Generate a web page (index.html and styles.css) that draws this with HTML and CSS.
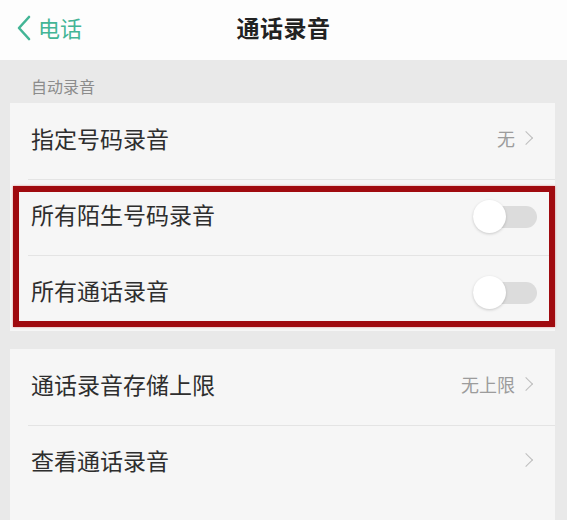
FILE: index.html
```html
<!DOCTYPE html>
<html>
<head>
  <meta charset="utf-8">
  <title>通话录音</title>
  <link rel="stylesheet" href="styles.css">
</head>
<body>
  <div class="topbar">
    <div class="back">
      <svg class="back-icon" width="16" height="26" viewBox="0 0 16 26">
        <path d="M13 2 L3 13 L13 24" fill="none" stroke="#43b596" stroke-width="2.6" stroke-linecap="round" stroke-linejoin="round"/>
      </svg>
      <span>电话</span>
    </div>
    <h1>通话录音</h1>
  </div>

  <div class="section-title">自动录音</div>

  <div class="card card-auto">
    <div class="row">
      <span class="label">指定号码录音</span>
      <span class="value">无<i class="arrow"></i></span>
    </div>
    <div class="row">
      <span class="label">所有陌生号码录音</span>
      <span class="switch"><span class="knob"></span></span>
    </div>
    <div class="row">
      <span class="label">所有通话录音</span>
      <span class="switch"><span class="knob"></span></span>
    </div>
    <!-- highlight frame drawn over the two switch rows -->
    <div class="highlight"></div>
  </div>

  <div class="card card-last">
    <div class="row">
      <span class="label">通话录音存储上限</span>
      <span class="value">无上限<i class="arrow"></i></span>
    </div>
    <div class="row">
      <span class="label">查看通话录音</span>
      <span class="value"><i class="arrow"></i></span>
    </div>
  </div>
</body>
</html>
```

FILE: styles.css
```css
body {
    margin: 0;
    background-color: #e9e9e9;
    font-family: "Noto Sans CJK SC", "Noto Sans", sans-serif;
    color: #333;
    overflow: hidden;
    height: 520px;
}

.topbar {
    height: 60px;
    background-color: #fdfdfd;
    display: flex;
    align-items: center;
    justify-content: center;
    position: relative;
}

.topbar h1 {
    margin: 0;
    font-size: 23px;
    font-weight: bold;
    color: #222;
    letter-spacing: 0.5px;
    margin-top: -6px;
}

.back {
    position: absolute;
    left: 16px;
    top: 15px;
    display: flex;
    align-items: center;
    gap: 6px;
    color: #43b596;
    font-size: 22px;
    line-height: 26px;
}

.back span {
    margin-top: -3px;
}

.back-icon {
    display: block;
}

.section-title {
    height: 43px;
    padding-left: 31px;
    font-size: 16px;
    color: #8c8c8c;
    line-height: 52px;
}

.card {
    margin: 0 12px 18px 10px;
    background-color: #f6f6f6;
    position: relative;
}

.card-last {
    padding-bottom: 19px;
    margin-bottom: 0;
}

.row {
    height: 76px;
    display: flex;
    align-items: center;
    justify-content: space-between;
    padding: 0 20px 0 21px;
    position: relative;
}

.row + .row::before {
    content: "";
    position: absolute;
    left: 18px;
    right: 0;
    top: 0;
    border-top: 1px solid #e4e4e4;
}

.label {
    font-size: 23px;
    color: #2e2e2e;
    margin-top: -6px;
}

.value {
    display: flex;
    align-items: center;
    font-size: 18px;
    color: #9c9c9c;
    margin-top: -6px;
}

.arrow {
    display: inline-block;
    width: 9px;
    height: 9px;
    border-top: 1.5px solid #bdbdbd;
    border-right: 1.5px solid #bdbdbd;
    transform: rotate(45deg);
    margin-left: 6px;
    margin-right: 4px;
}

.switch {
    width: 64px;
    height: 22px;
    border-radius: 11px;
    background-color: #dcdcdc;
    position: relative;
    margin-right: -2px;
}

.knob {
    position: absolute;
    left: 0;
    top: -6px;
    width: 33px;
    height: 33px;
    border-radius: 50%;
    background-color: #fff;
    box-shadow: 0 1px 3px rgba(0, 0, 0, 0.18);
}

.highlight {
    position: absolute;
    left: 3px;
    right: 0;
    top: 83px;
    height: 129px;
    border: 6px solid #a00b10;
    box-shadow: 0 0 2px rgba(200, 40, 40, 0.5);
}
```
